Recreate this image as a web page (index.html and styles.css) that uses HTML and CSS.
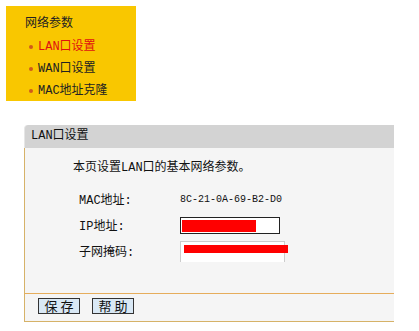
FILE: index.html
```html
<!DOCTYPE html>
<html lang="zh-CN">
<head>
  <meta charset="UTF-8" />
  <title>LAN口设置</title>
  <link rel="stylesheet" href="styles.css">
</head>
<body>
  <div class="menu">
    <div class="menu-title">网络参数</div>
    <ul>
      <li class="current">LAN口设置</li>
      <li>WAN口设置</li>
      <li>MAC地址克隆</li>
    </ul>
  </div>

  <div class="panel">
    <div class="panel-head">LAN口设置</div>
    <div class="panel-body">
      <p class="intro">本页设置LAN口的基本网络参数。</p>
      <div class="form">
        <div class="label">MAC地址:</div>
        <div class="value mac">8C-21-0A-69-B2-D0</div>

        <div class="label">IP地址:</div>
        <div class="value">
          <div class="field dark"><span class="hide hide-ip"></span></div>
        </div>

        <div class="label">子网掩码:</div>
        <div class="value">
          <div class="field light"><span class="hide hide-mask"></span></div>
        </div>
      </div>
    </div>
    <div class="panel-foot">
      <button>保 存</button>
      <button>帮 助</button>
    </div>
  </div>
</body>
</html>
```

FILE: styles.css
```css
body {
  margin: 0;
  font-family: "Liberation Mono", "Noto Sans CJK SC", monospace;
  font-size: 12px;
  color: #111;
  background: #fff;
}

/* menu */
.menu {
  margin: 6px 0 0 6px;
  width: 130px;
  height: 95px;
  box-sizing: border-box;
  background: #f9c700;
  padding: 10px 0 0 19px;
}

.menu-title {
  line-height: 16px;
  color: #222;
}

.menu ul {
  list-style: none;
  margin: 4px 0 0 0;
  padding: 0;
}

.menu li {
  position: relative;
  line-height: 22px;
  padding-left: 13px;
  color: #222;
}

.menu li::before {
  content: "";
  position: absolute;
  left: 4px;
  top: 9px;
  width: 4px;
  height: 4px;
  border-radius: 50%;
  background: #d05a1a;
}

.menu li.current {
  color: #e01010;
}

/* panel */
.panel {
  margin: 24px 0 0 24px;
  width: 370px;
}

.panel-head {
  height: 23px;
  line-height: 23px;
  padding-left: 6px;
  background: #d3d3d3;
  border-radius: 4px 0 0 0;
  border-left: 1px solid #e6e6e6;
}

.panel-body {
  height: 145px;
  box-sizing: border-box;
  background: #f5f5f5;
  border-left: 1px solid #d6b268;
  padding-top: 13px;
}

.intro {
  margin: 0 0 0 48px;
  line-height: 14px;
}

.form {
  display: grid;
  grid-template-columns: 101px 1fr;
  grid-auto-rows: 26px;
  margin: 11px 0 0 54px;
  align-items: center;
}

.mac {
  font-size: 10px;
}

.field {
  position: relative;
  box-sizing: border-box;
  background: #fff;
}

.field.dark {
  width: 100px;
  height: 17px;
  border: 1px solid #222;
}

.field.light {
  width: 105px;
  height: 21px;
  border: 1px solid #ccc;
  border-bottom: none;
}

.hide {
  position: absolute;
  background: #f00;
}

.hide-ip {
  left: 1px;
  top: 2px;
  width: 74px;
  height: 12px;
}

.hide-mask {
  left: 3px;
  top: 3px;
  width: 104px;
  height: 8px;
}

.panel-foot {
  height: 29px;
  box-sizing: border-box;
  background: #f5f5f5;
  border-top: 1px solid #e6ad5c;
  border-bottom: 1px solid #d6b268;
  border-left: 1px solid #d6b268;
  padding: 4px 0 0 13px;
  display: flex;
  gap: 12px;
  align-items: flex-start;
}

.panel-foot button {
  font-family: "Noto Sans CJK SC", sans-serif;
  font-size: 13px;
  width: 42px;
  height: 16px;
  line-height: 14px;
  padding: 0;
  background: #d9e8f5;
  border: 1px solid #333;
  color: #111;
}
```
